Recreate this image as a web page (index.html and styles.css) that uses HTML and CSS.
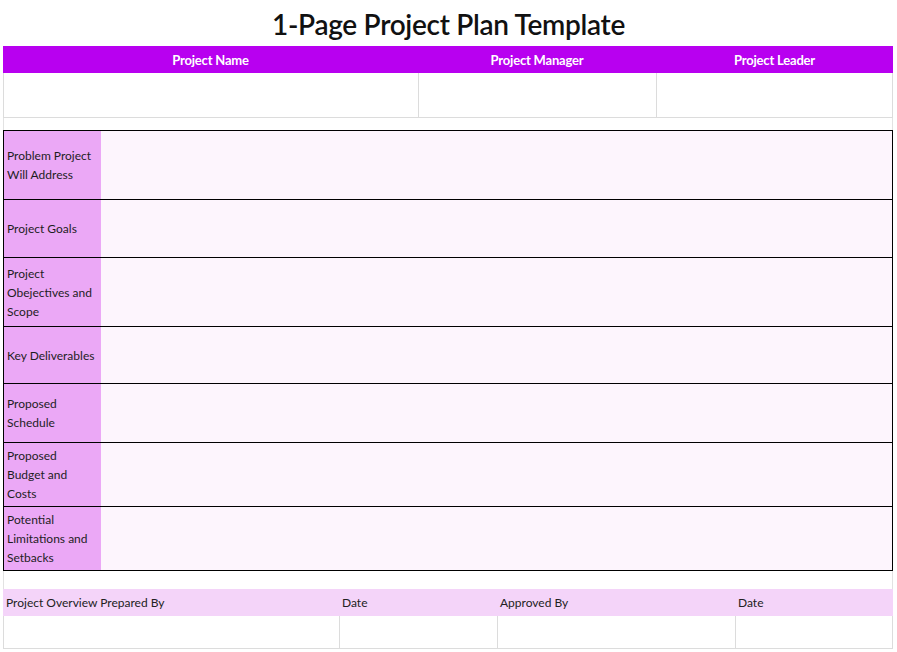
FILE: index.html
```html
<!DOCTYPE html>
<html>
<head>
<meta charset="utf-8">
<link rel="stylesheet" href="styles.css">
</head>
<body>
<div class="page">
  <h1 class="title">1-Page Project Plan Template</h1>
  <div class="info">
    <div class="info-head">Project Name</div>
    <div class="info-head">Project Manager</div>
    <div class="info-head">Project Leader</div>
    <div class="info-cell"></div>
    <div class="info-cell"></div>
    <div class="info-cell last"></div>
  </div>
  <div class="spacer s1"></div>
  <div class="plan">
    <div class="plan-row r1"><div class="label">Problem Project Will Address</div><div class="content"></div></div>
    <div class="plan-row r2"><div class="label">Project Goals</div><div class="content"></div></div>
    <div class="plan-row r3"><div class="label">Project Obejectives and Scope</div><div class="content"></div></div>
    <div class="plan-row r4"><div class="label">Key Deliverables</div><div class="content"></div></div>
    <div class="plan-row r5"><div class="label">Proposed Schedule</div><div class="content"></div></div>
    <div class="plan-row r6"><div class="label">Proposed Budget and Costs</div><div class="content"></div></div>
    <div class="plan-row r7"><div class="label">Potential Limitations and Setbacks</div><div class="content"></div></div>
  </div>
  <div class="spacer s2"></div>
  <div class="foot">
    <div class="foot-head">Project Overview Prepared By</div>
    <div class="foot-head">Date</div>
    <div class="foot-head">Approved By</div>
    <div class="foot-head">Date</div>
    <div class="foot-cell"></div>
    <div class="foot-cell"></div>
    <div class="foot-cell"></div>
    <div class="foot-cell last"></div>
  </div>
</div>
</body>
</html>
```
FILE: styles.css
```css
* { box-sizing: border-box; }
html, body { margin: 0; padding: 0; background: #fff; }
body { font-family: "Lato", "Liberation Sans", sans-serif; color: #222; }
.page { padding: 0 3px; width: 897px; }
.title {
  margin: 0;
  height: 46px;
  font-size: 28px;
  font-weight: 600;
  text-align: center;
  line-height: 48px;
  color: #111;
  letter-spacing: -0.3px;
}
.info {
  display: grid;
  grid-template-columns: 415px 238px 237px;
  width: 890px;
}
.info-head {
  background: #b800f0;
  color: #fff;
  font-weight: 700;
  font-size: 13px;
  height: 27px;
  line-height: 28px;
  text-align: center;
  letter-spacing: -0.2px;
}
.info-cell {
  height: 45px;
  border-left: 1px solid #dcdcdc;
  border-bottom: 1px solid #dcdcdc;
}
.info-cell.last { border-right: 1px solid #dcdcdc; }
.spacer { width: 890px; border-left: 1px solid #e2e2e2; border-right: 1px solid #e2e2e2; }
.s1 { height: 12px; }
.s2 { height: 18px; }
.plan { width: 890px; border: 1px solid #000; }
.plan-row { display: grid; grid-template-columns: 97px 1fr; border-top: 1px solid #000; }
.plan-row.r1 { border-top: 0; height: 68px; }
.r2 { height: 58px; }
.r3 { height: 69px; }
.r4 { height: 57px; }
.r5 { height: 59px; }
.r6 { height: 64px; }
.r7 { height: 64px; }
.label {
  background: #eba8f6;
  font-size: 12px;
  line-height: 19px;
  padding: 0 5px 0 3px;
  display: flex;
  align-items: center;
  color: #1e1e1e;
}
.content { background: #fdf5fd; }
.foot {
  display: grid;
  grid-template-columns: 336px 158px 238px 158px;
  width: 890px;
}
.foot-head {
  background: #f4d4f9;
  font-size: 12px;
  height: 27px;
  line-height: 28px;
  padding-left: 3px;
  color: #222;
}
.foot-cell {
  height: 33px;
  border-left: 1px solid #dcdcdc;
  border-bottom: 1px solid #dcdcdc;
}
.foot-cell.last { border-right: 1px solid #dcdcdc; }
```
